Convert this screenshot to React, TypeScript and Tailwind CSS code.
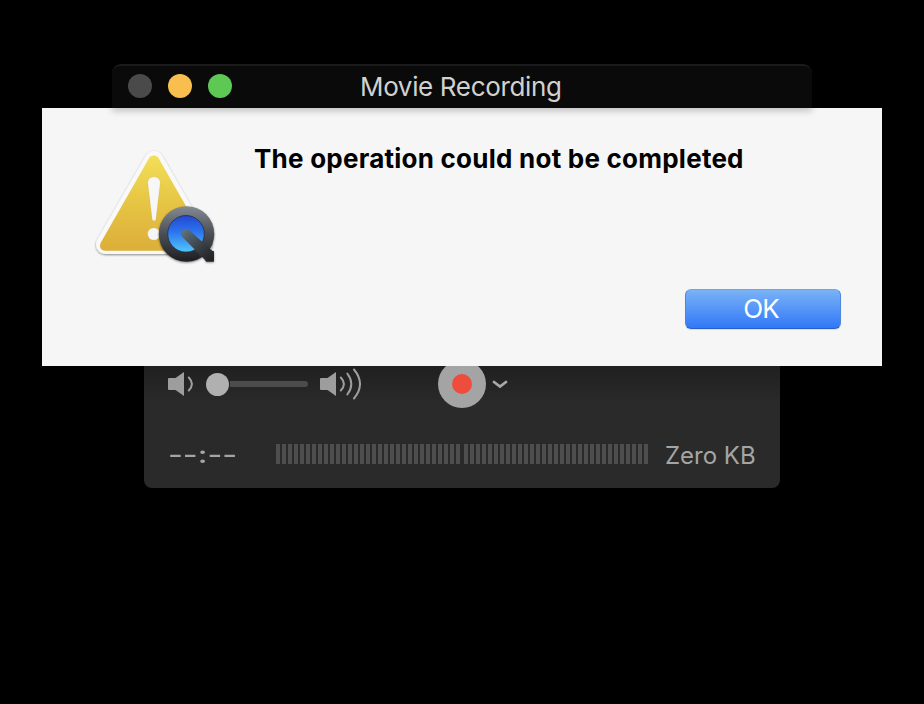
const METER_BARS = Array.from({ length: 31 }, (_, i) => i);

function AlertIcon() {
  return (
    <svg width="130" height="130" viewBox="90 145 130 130" className="block">
      <defs>
        <linearGradient id="sign" x1="0" y1="0" x2="0" y2="1">
          <stop offset="0" stopColor="#f3df58" />
          <stop offset="0.5" stopColor="#e6c544" />
          <stop offset="1" stopColor="#dcae39" />
        </linearGradient>
        <linearGradient id="ring" x1="0" y1="0" x2="0" y2="1">
          <stop offset="0" stopColor="#858b92" />
          <stop offset="0.45" stopColor="#50545a" />
          <stop offset="1" stopColor="#1d1e20" />
        </linearGradient>
        <linearGradient id="lens" x1="0" y1="0" x2="0" y2="1">
          <stop offset="0" stopColor="#2447cf" />
          <stop offset="0.45" stopColor="#2c74ee" />
          <stop offset="1" stopColor="#52c8fa" />
        </linearGradient>
        <linearGradient id="tail" gradientUnits="userSpaceOnUse" x1="184" y1="230" x2="211" y2="259">
          <stop offset="0" stopColor="#5d7180" />
          <stop offset="0.5" stopColor="#3e454c" />
          <stop offset="1" stopColor="#222325" />
        </linearGradient>
        <filter id="soft" x="-20%" y="-20%" width="140%" height="140%">
          <feDropShadow dx="0" dy="1" stdDeviation="1" floodColor="#000" floodOpacity="0.45" />
        </filter>
      </defs>
      <g filter="url(#soft)">
        <path d="M154 160.500 L202.500 244.500 H105.500 Z" fill="#f9f9f9" stroke="#f9f9f9" strokeWidth="19" strokeLinejoin="round" />
      </g>
      <path d="M153.800 155.500 C156 155.500 157.700 156.700 158.900 158.700 L206.800 242.300 C209.300 246.700 206.900 250.700 202.300 250.700 H105.300 C100.700 250.700 98.600 246.700 101 242.300 L148.700 158.700 C149.900 156.700 151.500 155.500 153.800 155.500 Z" fill="url(#sign)" />
      <path d="M147.700 183 C147.700 174.700 160.300 174.700 160.300 183 L156 218.800 C155.600 221.700 152.500 221.700 152.100 218.800 Z" fill="#f7f7f7" stroke="#b99a37" strokeOpacity="0.35" strokeWidth="0.6" />
      <circle cx="153.800" cy="234" r="6.200" fill="#f5f5f5" stroke="#b99a37" strokeOpacity="0.35" strokeWidth="0.6" />
      <g filter="url(#soft)">
        <circle cx="186.500" cy="234" r="27.800" fill="url(#ring)" />
        <path d="M201 250 L213.800 251 V261.500 H206 Z" fill="#242527" />
      </g>
      <circle cx="186" cy="233.800" r="18.300" fill="url(#lens)" stroke="#222e49" strokeWidth="0.800" />
      <path d="M182.200 236.800 C178.200 232.500 184.500 226.200 189.300 230.200 L213.900 252.200 V261.500 H206.500 Z" fill="url(#tail)" />
    </svg>
  );
}

function Speaker({ loud = false }: { loud?: boolean }) {
  return (
    <svg width={loud ? 44 : 28} height="34" viewBox={loud ? "0 0 44 34" : "0 0 28 34"} className="block shrink-0" fill="none">
      <path d="M0 12 Q0 11 1 11 H7.500 L16 5 V29 L7.500 23 H1 Q0 23 0 22 Z" fill="#9d9d9d" />
      <path d="M20.800 10.500 Q27 17 20.800 23.500" stroke="#9d9d9d" strokeWidth="2" strokeLinecap="round" />
      {loud && (
        <>
          <path d="M27.300 6.500 Q35.300 17 27.300 27.500" stroke="#9d9d9d" strokeWidth="2" strokeLinecap="round" />
          <path d="M34 2.500 Q46 17 34 31.500" stroke="#9d9d9d" strokeWidth="2" strokeLinecap="round" />
        </>
      )}
    </svg>
  );
}

function Meter() {
  return (
    <div className="flex h-5 gap-[2px]">
      {METER_BARS.map((bar) => (
        <div key={bar} className="w-1 bg-[#4e4e4e]" />
      ))}
    </div>
  );
}

export default function App() {
  return (
    <div className="flex h-[704px] w-[924px] flex-col items-center overflow-hidden bg-black pt-16 font-['Inter',sans-serif]">
      <header className="z-10 grid h-11 w-[700px] grid-cols-[248px_1fr] items-center rounded-t-[9px] border-t-2 border-[#1b1b1b] bg-[#0a0a0a] shadow-[0_3px_7px_rgba(0,0,0,0.22)]">
        <div className="flex gap-4 pb-0.5 pl-4">
          <span className="size-6 rounded-full bg-[#4a4a4a]" />
          <span className="size-6 rounded-full bg-[#f8bf4f]" />
          <span className="size-6 rounded-full bg-[#5ec854]" />
        </div>
        <h1 className="whitespace-nowrap text-[26px] leading-8 tracking-[-0.35px] text-[#d0d2cf]">Movie Recording</h1>
      </header>

      <section className="flex h-[258px] w-[840px] shrink-0 bg-[#f6f6f6] pt-[37px] pl-12">
        <AlertIcon />
        <div className="flex flex-1 flex-col pl-[34px]">
          <p className="mt-[-2px] whitespace-nowrap text-[26px] leading-8 font-bold tracking-[0.24px] text-black">The operation could not be completed</p>
          <button className="mt-[114px] mr-[41px] flex h-10 w-[156px] items-center justify-center self-end rounded-md border border-t-[#6da6e9] border-x-[#4c87dc] border-b-[#2860c6] bg-linear-to-b from-[#7ab2f5] to-[#3177f8] pr-1 pb-0.5 text-[26px] tracking-[-0.9px] text-white shadow-[0_1px_1px_rgba(0,0,0,0.1)]">
            OK
          </button>
        </div>
      </section>

      <section className="h-[122px] w-[636px] shrink-0 overflow-hidden rounded-b-lg bg-linear-to-b from-[#202020] to-[#2a2a2a] to-30%">
        <div className="flex h-9 items-center pl-6">
          <Speaker />
          <div className="ml-[10px] flex w-[102px] items-center">
            <span className="size-[23px] shrink-0 rounded-full bg-[#b0b0b0]" />
            <span className="ml-px h-1.5 flex-1 rounded-r-full bg-[#4c4c4c]" />
          </div>
          <div className="ml-3"><Speaker loud /></div>
          <div className="ml-[74px] flex size-12 shrink-0 items-center justify-center rounded-full bg-[#a4a4a4]">
            <span className="size-5 rounded-full bg-[#ee4c3c]" />
          </div>
          <svg width="18" height="12" viewBox="0 0 18 12" className="ml-[5px]" fill="none">
            <path d="M3 4 L9 8.500 L15 4" stroke="#a8a8a8" strokeWidth="2.800" strokeLinecap="round" />
          </svg>
        </div>
        <div className="mt-[42px] flex h-5 items-center">
          <div className="flex w-[132px] pt-px pl-6 text-[24px] font-medium text-[#a5a5a5]">
            <span className="origin-left scale-x-[1.34] whitespace-nowrap">--:--</span>
          </div>
          <div className="flex gap-1">
            <Meter />
            <Meter />
          </div>
          <span className="ml-[17px] whitespace-nowrap pt-[3px] text-[24px] leading-6 text-[#a5a5a5]">Zero KB</span>
        </div>
      </section>
    </div>
  );
}
